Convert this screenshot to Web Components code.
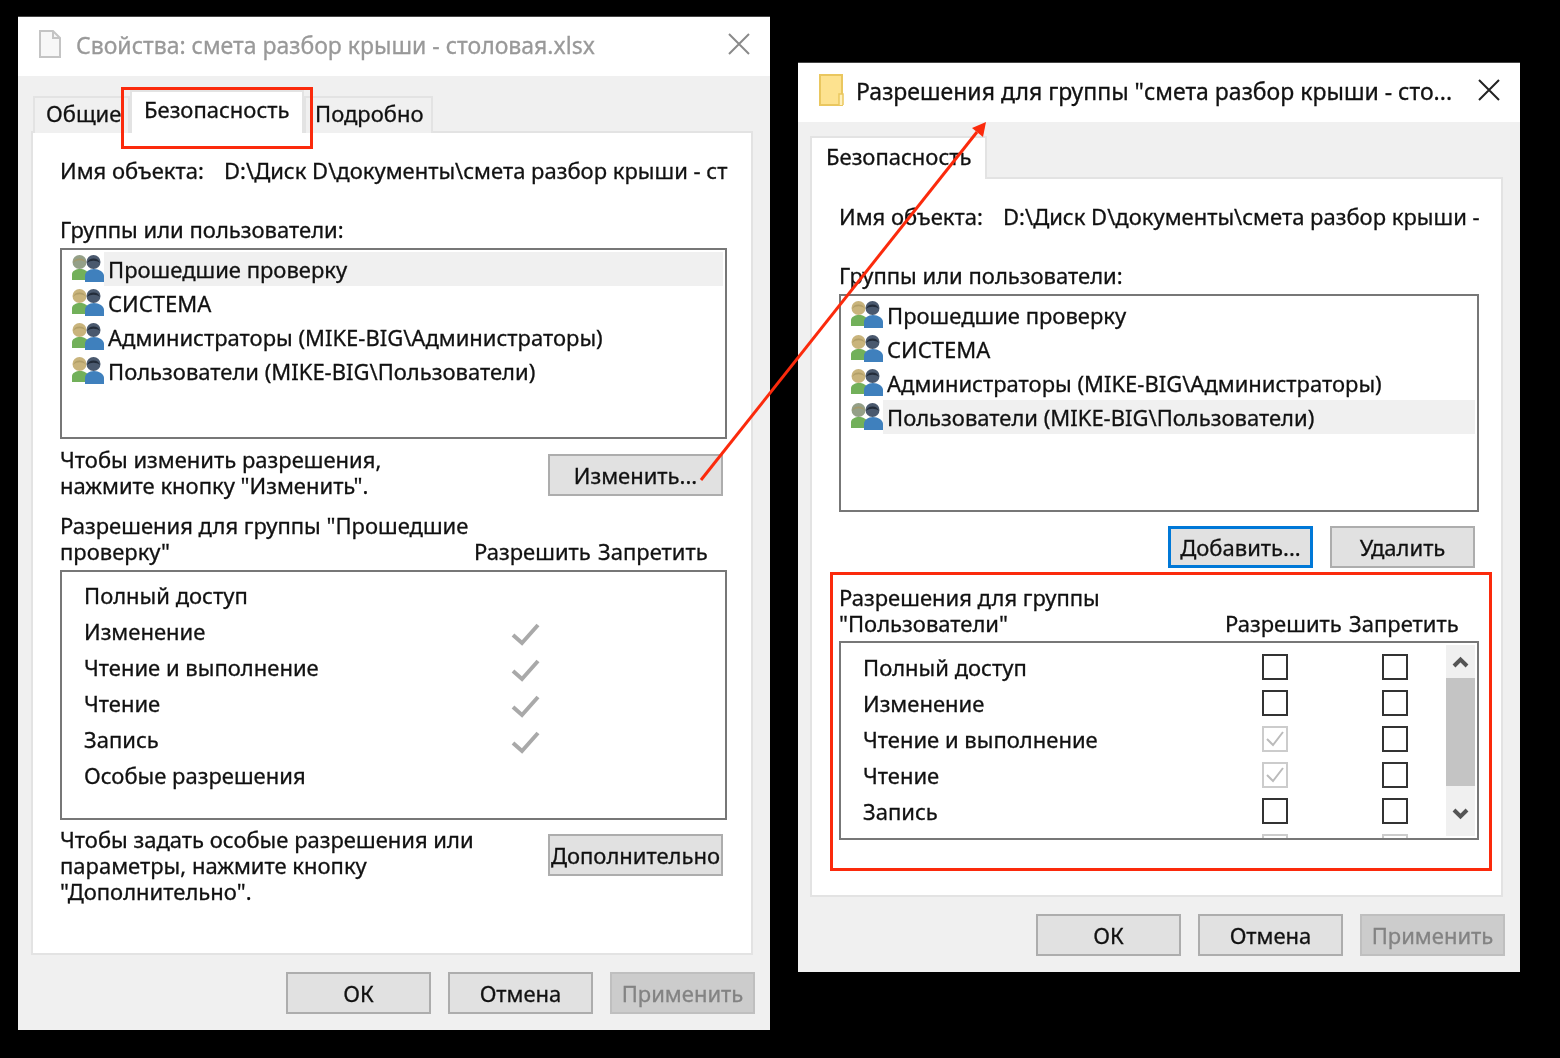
<!DOCTYPE html>
<html lang="ru">
<head>
<meta charset="utf-8">
<title>Свойства и разрешения</title>
<style>
html, body { margin: 0; height: 100%; background: #000; }
body { font: 22px/26px "Noto Sans", "Liberation Sans", sans-serif; color: #111; -webkit-text-stroke: .3px; position: relative; overflow: hidden; }
x-window { filter: blur(.3px); }
x-window.props { position: absolute; left: 18px; top: 16px; width: 752px; height: 1014px; --side: 13px; --pad-r: 24px; --tab-x: 2px; --row-top: 5px; }
x-window.perms { position: absolute; left: 798px; top: 62px; width: 722px; height: 910px; --side: 12px; --pad-r: 22px; --tab-x: 0px; --row-top: 6px; }
x-annotations { position: absolute; left: 0; top: 0; z-index: 2; }
</style>
</head>
<body>

<x-window class="props" heading="Свойства: смета разбор крыши - столовая.xlsx" inactive>
  <svg slot="icon" width="24" height="28" viewBox="0 0 24 28"><path d="M2 1h13l7 7v19H2z" fill="#f7f7f7" stroke="#c4c4c4" stroke-width="2"/><path d="M15 1v7h7" fill="none" stroke="#c4c4c4" stroke-width="2"/></svg>
  <x-tab slot="tabs" style="--w:97px;--pad:11px">Общие</x-tab>
  <x-tab slot="tabs" selected style="--w:174px;--pad:12px;--top:4px">Безопасность</x-tab>
  <x-tab slot="tabs" style="--w:129px;--pad:9px">Подробно</x-tab>

  <x-field style="margin-top:24px" label="Имя объекта:">D:\Диск D\документы\смета разбор крыши - ст</x-field>
  <div style="margin-top:33px;height:32px">Группы или пользователи:</div>
  <x-list style="height:191px">
    <x-user selected>Прошедшие проверку</x-user>
    <x-user>СИСТЕМА</x-user>
    <x-user>Администраторы (MIKE-BIG\Администраторы)</x-user>
    <x-user>Пользователи (MIKE-BIG\Пользователи)</x-user>
  </x-list>
  <x-action-row style="margin-top:7px">
    Чтобы изменить разрешения,<br>нажмите кнопку "Изменить".
    <x-button slot="action" style="--w:175px">Изменить...</x-button>
  </x-action-row>
  <x-perm-head style="margin-top:14px;height:58px;--head-col:414px">Разрешения для группы "Прошедшие<br>проверку"</x-perm-head>
  <x-perm-table style="height:250px;--label-col:382px">
    <x-perm-row label="Полный доступ"></x-perm-row>
    <x-perm-row label="Изменение" allow="tick"></x-perm-row>
    <x-perm-row label="Чтение и выполнение" allow="tick"></x-perm-row>
    <x-perm-row label="Чтение" allow="tick"></x-perm-row>
    <x-perm-row label="Запись" allow="tick"></x-perm-row>
    <x-perm-row label="Особые разрешения"></x-perm-row>
  </x-perm-table>
  <x-action-row style="margin-top:6px">
    Чтобы задать особые разрешения или<br>параметры, нажмите кнопку<br>"Дополнительно".
    <x-button slot="action" style="--w:175px">Дополнительно</x-button>
  </x-action-row>

  <x-button slot="footer">ОК</x-button>
  <x-button slot="footer">Отмена</x-button>
  <x-button slot="footer" disabled>Применить</x-button>
</x-window>

<x-window class="perms" heading="Разрешения для группы &quot;смета разбор крыши - сто...">
  <svg slot="icon" style="margin-right:-4px" width="28" height="34" viewBox="0 0 28 34"><path d="M2 2h22v30H2z" fill="#fde28f" stroke="#eac75f" stroke-width="2"/><path d="M21 32V21h4v11" fill="#fff0bd" stroke="#eac75f" stroke-width="1.5"/></svg>
  <x-tab slot="tabs" selected style="--w:177px;--pad:14px">Безопасность</x-tab>

  <x-field style="margin-top:24px" label="Имя объекта:">D:\Диск D\документы\смета разбор крыши -</x-field>
  <div style="margin-top:33px;height:32px">Группы или пользователи:</div>
  <x-list style="height:218px">
    <x-user>Прошедшие проверку</x-user>
    <x-user>СИСТЕМА</x-user>
    <x-user>Администраторы (MIKE-BIG\Администраторы)</x-user>
    <x-user selected>Пользователи (MIKE-BIG\Пользователи)</x-user>
  </x-list>
  <x-button-row style="margin-top:14px">
    <x-button focused>Добавить...</x-button>
    <x-button>Удалить</x-button>
  </x-button-row>
  <x-perm-head style="margin-top:16px;--head-col:386px">Разрешения для группы<br>"Пользователи"</x-perm-head>
  <x-perm-table style="height:199px;--label-col:352px" scroll>
    <x-perm-row label="Полный доступ" allow="box" deny="box"></x-perm-row>
    <x-perm-row label="Изменение" allow="box" deny="box"></x-perm-row>
    <x-perm-row label="Чтение и выполнение" allow="checked" deny="box"></x-perm-row>
    <x-perm-row label="Чтение" allow="checked" deny="box"></x-perm-row>
    <x-perm-row label="Запись" allow="box" deny="box"></x-perm-row>
    <x-perm-row allow="off" deny="off"></x-perm-row>
  </x-perm-table>

  <x-button slot="footer">ОК</x-button>
  <x-button slot="footer">Отмена</x-button>
  <x-button slot="footer" disabled>Применить</x-button>
</x-window>

<x-annotations></x-annotations>

<script>
function shadow(el, html) {
  el.attachShadow({ mode: 'open' }).innerHTML = html;
}

class XWindow extends HTMLElement {
  connectedCallback() {
    shadow(this, `
<style>
:host { display: flex; flex-direction: column; background: #f0f0f0; box-sizing: border-box; border-top: 1px solid #444; }
.title { height: 59px; box-sizing: border-box; flex: none; background: #fff; display: flex; align-items: center; padding: 0 20px 5px; gap: 14px; font-size: 23px; }
.text { flex: 1; white-space: nowrap; margin-top: 2px; }
:host([inactive]) .text { color: #999; }
:host([inactive]) .close { stroke: #8a8a8a; }
.close { flex: none; stroke: #222; }
.body { flex: 1; display: flex; flex-direction: column; padding: 14px 17px 16px var(--side); min-height: 0; }
.tabs { display: flex; align-items: flex-end; height: 43px; flex: none; position: relative; z-index: 1; margin-bottom: -2px; padding-left: var(--tab-x); }
.panel { flex: 1; background: #fff; border: 2px solid #e3e3e3; padding: 0 var(--pad-r) 0 27px; min-height: 0; }
.foot { flex: none; display: flex; justify-content: flex-end; gap: 17px; margin: 17px -2px 0 0; }
</style>
<div class="title">
  <slot name="icon"></slot>
  <div class="text">${this.getAttribute('heading')}</div>
  <svg class="close" width="22" height="22" viewBox="0 0 22 22"><path d="M1 1l20 20M21 1L1 21" stroke-width="2" fill="none"/></svg>
</div>
<div class="body">
  <div class="tabs"><slot name="tabs"></slot></div>
  <div class="panel"><slot></slot></div>
  <div class="foot"><slot name="footer"></slot></div>
</div>`);
  }
}

class XTab extends HTMLElement {
  connectedCallback() {
    shadow(this, `
<style>
:host { display: block; box-sizing: border-box; width: var(--w); height: 37px; padding: 2px 0 0 var(--pad); background: #f0f0f0; border: 2px solid #e3e3e3; border-bottom: 0; white-space: nowrap; }
:host([selected]) { height: 43px; padding-top: var(--top, 5px); background: #fff; }
</style><slot></slot>`);
  }
}

class XField extends HTMLElement {
  connectedCallback() {
    shadow(this, `
<style>
:host { display: grid; grid-template-columns: 164px 1fr; white-space: nowrap; }
</style><span>${this.getAttribute('label')}</span><span><slot></slot></span>`);
  }
}

class XList extends HTMLElement {
  connectedCallback() {
    shadow(this, `
<style>
:host { display: block; box-sizing: border-box; background: #fff; border: 2px solid #777; padding: 2px; }
</style><slot></slot>`);
  }
}

class XUser extends HTMLElement {
  connectedCallback() {
    shadow(this, `
<style>
:host { display: flex; align-items: stretch; height: 34px; padding-left: 8px; white-space: nowrap; }
svg { flex: none; align-self: center; filter: blur(.4px); }
.name { flex: 1; display: flex; align-items: center; padding-left: 4px; }
:host([selected]) .name { background: #f0f0f0; }
:host([selected]) .head { fill: #94a088; }
</style>
<svg width="32" height="30" viewBox="0 0 32 30">
  <circle class="head" cx="7.500" cy="8" r="7" fill="#c9b47c"/>
  <path d="M1 9a7 7 0 0 1 13 0c-2-3-9-4-13 0z" fill="#a89560" opacity=".7"/>
  <path d="M0 26v-6c0-3 4-5 8-5s8 2 8 5v6z" fill="#72b05a"/>
  <circle cx="21.500" cy="8" r="7" fill="#4a596e"/>
  <path d="M15 9a7 7 0 0 1 13 0c-3-3-10-3-13 0z" fill="#232c3a"/>
  <path d="M13 28v-6c0-4 4-7 9-7s10 3 10 7v6z" fill="#3f80bd"/>
</svg><span class="name"><slot></slot></span>`);
  }
}

class XButton extends HTMLElement {
  connectedCallback() {
    shadow(this, `
<style>
:host { display: flex; align-items: center; justify-content: center; box-sizing: border-box; flex: none; width: var(--w, 145px); height: 42px; background: #e1e1e1; border: 2px solid #adadad; white-space: nowrap; }
:host([focused]) { border: 3px solid #0078d7; }
:host([disabled]) { background: #cccccc; border-color: #bfbfbf; color: #838383; }
</style><slot></slot>`);
  }
}

class XActionRow extends HTMLElement {
  connectedCallback() {
    shadow(this, `
<style>
:host { display: flex; justify-content: space-between; align-items: flex-start; white-space: nowrap; }
slot[name=action]::slotted(*) { margin: 8px 4px 0 0; }
</style><div><slot></slot></div><slot name="action"></slot>`);
  }
}

class XButtonRow extends HTMLElement {
  connectedCallback() {
    shadow(this, `
<style>
:host { display: flex; justify-content: flex-end; gap: 17px; padding-right: 4px; }
</style><slot></slot>`);
  }
}

class XPermHead extends HTMLElement {
  connectedCallback() {
    shadow(this, `
<style>
:host { display: block; height: 57px; white-space: nowrap; }
.cols { display: grid; grid-template-columns: var(--head-col) 124px 1fr; height: 52px; align-items: end; }
</style>
<div class="cols"><div><slot></slot></div><span>Разрешить</span><span>Запретить</span></div>`);
  }
}

class XPermTable extends HTMLElement {
  connectedCallback() {
    const bar = this.hasAttribute('scroll') ? `
<div class="bar">
  <svg width="29" height="33" viewBox="0 0 29 33"><path d="M8 21l6.500-6.500L21 21" fill="none" stroke="#555" stroke-width="4"/></svg>
  <div class="thumb"></div>
  <svg width="29" height="49" viewBox="0 0 29 49"><path d="M8 24l6.500 6.500L21 24" fill="none" stroke="#555" stroke-width="4"/></svg>
</div>` : '';
    shadow(this, `
<style>
:host { display: flex; box-sizing: border-box; background: #fff; border: 2px solid #777; overflow: hidden; }
.rows { flex: 1; padding: var(--row-top) 0 0 22px; overflow: hidden; }
.bar { flex: none; width: 29px; margin: 2px; background: #f0f0f0; display: flex; flex-direction: column; overflow: hidden; }
.bar svg { flex: none; }
.thumb { flex: none; height: 108px; background: #c4c4c4; }
</style><div class="rows"><slot></slot></div>${bar}`);
  }
}

class XPermRow extends HTMLElement {
  mark(kind) {
    if (kind === 'tick') return '<svg width="30" height="24" viewBox="0 0 30 24"><path d="M2 12l9 8L27 2" fill="none" stroke="#a9a9a9" stroke-width="4"/></svg>';
    if (kind === 'box') return '<span class="box"></span>';
    if (kind === 'off') return '<span class="box off"></span>';
    if (kind === 'checked') return '<span class="box off"><svg width="22" height="22" viewBox="0 0 22 22"><path d="M3 11l6 6L19 4" fill="none" stroke="#bbb" stroke-width="2"/></svg></span>';
    return '';
  }
  connectedCallback() {
    shadow(this, `
<style>
:host { display: grid; grid-template-columns: var(--label-col) 120px 120px; height: 36px; align-items: center; white-space: nowrap; }
.cell { display: flex; justify-content: center; }
.tick { padding-top: 8px; }
.box { display: block; box-sizing: border-box; width: 26px; height: 26px; border: 2px solid #333; }
.box.off { border-color: #ccc; }
.box svg { display: block; }
</style>
<span>${this.getAttribute('label') || ''}</span>
<span class="cell ${this.getAttribute('allow') === 'tick' ? 'tick' : ''}">${this.mark(this.getAttribute('allow'))}</span>
<span class="cell">${this.mark(this.getAttribute('deny'))}</span>`);
  }
}

class XAnnotations extends HTMLElement {
  connectedCallback() {
    shadow(this, `
<style>:host { display: block; pointer-events: none; } svg { display: block; }</style>
<svg width="1560" height="1058" viewBox="0 0 1560 1058">
  <g fill="none" stroke="#fb2a0c" stroke-width="3">
    <rect x="122.500" y="88.500" width="189" height="59"/>
    <rect x="831.500" y="573.500" width="659" height="296"/>
    <path d="M701 480L977 132"/>
  </g>
  <polygon points="986,122 972,128 983,137" fill="#fb2a0c"/>
</svg>`);
  }
}

customElements.define('x-window', XWindow);
customElements.define('x-tab', XTab);
customElements.define('x-field', XField);
customElements.define('x-list', XList);
customElements.define('x-user', XUser);
customElements.define('x-button', XButton);
customElements.define('x-action-row', XActionRow);
customElements.define('x-button-row', XButtonRow);
customElements.define('x-perm-head', XPermHead);
customElements.define('x-perm-table', XPermTable);
customElements.define('x-perm-row', XPermRow);
customElements.define('x-annotations', XAnnotations);
</script>
</body>
</html>
